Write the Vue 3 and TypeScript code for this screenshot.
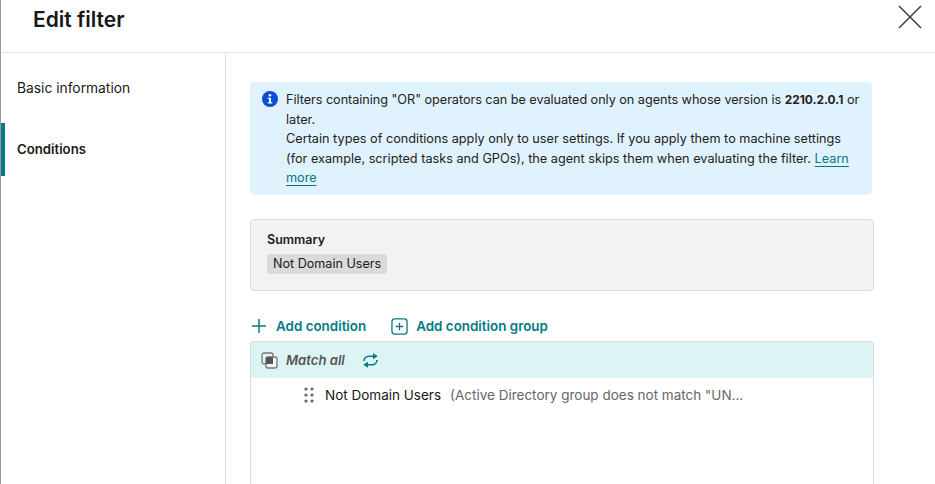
<script setup lang="ts">
const title: string = 'Edit filter'
</script>

<template>
  <div class="page">
    <header class="head">
      <h1>{{ title }}</h1>
      <svg class="close" width="24" height="24" viewBox="0 0 24 24"><path d="M1 1 L23 23 M23 1 L1 23" stroke="#333" stroke-width="1.4" fill="none" /></svg>
    </header>
    <div class="body">
      <nav class="side">
        <div class="item">Basic information</div>
        <div class="item active">Conditions</div>
      </nav>
      <main class="content">
        <section class="info">
          <svg class="info-icon" width="16" height="16" viewBox="0 0 16 16"><circle cx="8" cy="8" r="8" fill="#0b4fd8" /><circle cx="8" cy="4.2" r="1.3" fill="#fff" /><path d="M5.8 6.7H9V11.2H10.3V12.6H5.8V11.2H7.1V8.1H5.8Z" fill="#fff" /></svg>
          <p><span class="tight">Filters containing "OR" operators can be evaluated only on agents whose version is</span> <b>2210.2.0.1</b> or later.<br />Certain types of conditions apply only to user settings. If you apply them to machine settings (for example, scripted tasks and GPOs), the agent skips them when evaluating the filter. <a>Learn more</a></p>
        </section>
        <section class="summary">
          <div class="sum-title">Summary</div>
          <span class="tag">Not Domain Users</span>
        </section>
        <div class="actions">
          <span class="action">
            <svg width="16" height="16" viewBox="0 0 16 16"><path d="M8 1V15M1 8H15" stroke="#057a85" stroke-width="1.5" fill="none" /></svg>
            Add condition
          </span>
          <span class="action group-action">
            <svg width="17" height="17" viewBox="0 0 18 18"><rect x="1" y="1" width="16" height="16" rx="3" stroke="#057a85" stroke-width="1.4" fill="none" /><path d="M9 5V13M5 9H13" stroke="#057a85" stroke-width="1.4" fill="none" /></svg>
            Add condition group
          </span>
        </div>
        <section class="group">
          <div class="group-head">
            <svg width="17" height="17" viewBox="0 0 17 17"><rect x="1" y="1" width="11" height="11" rx="2" fill="none" stroke="#777" stroke-width="1.3" /><rect x="5" y="5" width="11" height="11" rx="2" fill="#eef6f6" stroke="#777" stroke-width="1.3" /><rect x="5" y="5" width="7" height="7" fill="#555" /></svg>
            <em>Match all</em>
            <svg class="swap" width="17" height="15" viewBox="0 0 17 15"><path d="M2 8A5 5 0 0 1 7 3.2H12.5" stroke="#057a85" stroke-width="1.6" fill="none" /><path d="M11 0.2L15.8 3.2L11 6.2Z" fill="#057a85" /><path d="M15 7A5 5 0 0 1 10 11.8H4.5" stroke="#057a85" stroke-width="1.6" fill="none" /><path d="M6 8.8L1.2 11.8L6 14.8Z" fill="#057a85" /></svg>
          </div>
          <div class="row">
            <svg class="grip" width="10" height="16" viewBox="0 0 10 16"><g fill="#666"><circle cx="2" cy="2" r="1.6" /><circle cx="8" cy="2" r="1.6" /><circle cx="2" cy="8" r="1.6" /><circle cx="8" cy="8" r="1.6" /><circle cx="2" cy="14" r="1.6" /><circle cx="8" cy="14" r="1.6" /></g></svg>
            <span class="name">Not Domain Users</span>
            <span class="desc">(Active Directory group does not match "UN...</span>
          </div>
        </section>
      </main>
    </div>
  </div>
</template>

<style>
html, body { margin: 0; overflow: hidden; background: #fff; }
</style>

<style scoped>
.page {
  width: 935px;
  height: 484px;
  box-sizing: border-box;
  border-left: 1px solid #9a9a9a;
  font-family: Inter, Roboto, "Liberation Sans", sans-serif;
  font-size: 13.5px;
  color: #1a1a1a;
  display: flex;
  flex-direction: column;
  overflow: hidden;
  background: #fff;
}
.head {
  height: 52px;
  flex: none;
  border-bottom: 1px solid #e2e2e2;
  display: flex;
  align-items: flex-start;
  justify-content: space-between;
  padding: 0 13px 0 32px;
}
h1 {
  margin: 7px 0 0;
  font-size: 21px;
  line-height: 26px;
  font-weight: 600;
  color: #171717;
}
.close { margin-top: 5px; }
.body { flex: 1; display: flex; min-height: 0; }
.side {
  width: 224px;
  flex: none;
  border-right: 1px solid #dedede;
  padding-top: 8px;
  display: flex;
  flex-direction: column;
}
.item {
  height: 53px;
  display: flex;
  align-items: center;
  padding-left: 16px;
  margin-bottom: 9px;
  font-size: 13.8px;
}
.active {
  font-weight: 600;
  font-size: 13.2px;
  border-left: 4px solid #057a85;
  padding-left: 12px;
  padding-bottom: 2px;
  box-sizing: border-box;
}
.content { flex: 1; padding: 29px 61px 0 24px; min-width: 0; }
.info {
  width: 622px;
  height: 113px;
  box-sizing: border-box;
  background: #e0f2fd;
  border-radius: 4px;
  padding: 8px 10px 8px 12px;
  display: flex;
  gap: 8px;
}
.info-icon { flex: none; margin-top: 1px; }
.info p { margin: 0; font-size: 12.7px; line-height: 19.6px; color: #222; }
.tight { letter-spacing: -0.05px; }
.info b { font-size: 11.9px; font-weight: 700; }
.info a { color: #057a85; text-decoration: underline; text-underline-offset: 3px; }
.summary {
  margin-top: 24px;
  height: 72px;
  box-sizing: border-box;
  background: #f2f2f2;
  border: 1px solid #dcdcdc;
  border-radius: 4px;
  padding: 12px 16px;
}
.sum-title { font-size: 12.5px; font-weight: 600; line-height: 16px; }
.tag {
  display: inline-block;
  margin-top: 6px;
  background: #dadada;
  border-radius: 3px;
  padding: 0 6px;
  font-size: 12.6px;
  line-height: 20px;
}
.actions { display: flex; gap: 25px; height: 24px; align-items: center; margin: 23px 0 3px 1px; }
.action {
  display: flex;
  align-items: center;
  gap: 9px;
  color: #057a85;
  font-weight: 600;
  font-size: 13.4px;
}
.group-action { gap: 8px; }
.group {
  height: 160px;
  box-sizing: border-box;
  border: 1px solid #dcdcdc;
  border-radius: 3px 3px 0 0;
}
.group-head {
  height: 36px;
  background: #dcf4f4;
  display: flex;
  align-items: center;
  padding-left: 10px;
  gap: 8px;
}
.group-head em { font-weight: 600; font-size: 13.1px; color: #555; }
.swap { margin-left: 9px; }
.row { display: flex; align-items: center; height: 34px; padding-left: 53px; }
.grip { margin-right: 11px; }
.name { font-size: 13.5px; color: #171717; }
.desc { margin-left: 9px; font-size: 13.5px; color: #666; }
</style>
